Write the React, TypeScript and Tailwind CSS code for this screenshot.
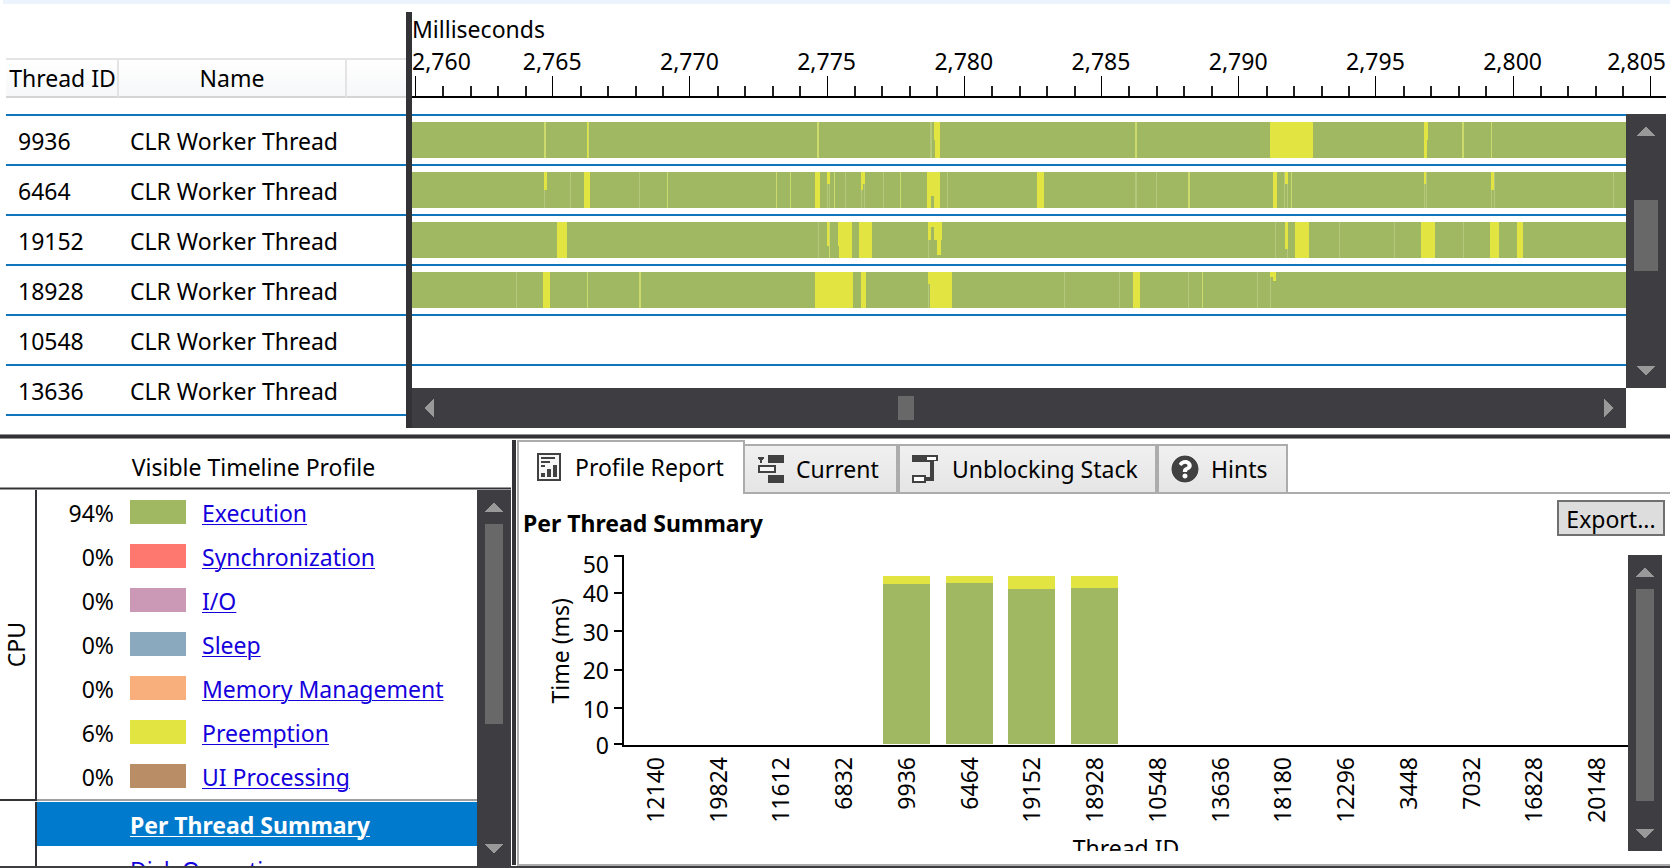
import React from "react";
import { FaQuestionCircle } from "react-icons/fa";

const TRACK_WIDTH = 1214;
const RULER_WIDTH = 1254;

const STRONG = "#e2e442";
const MID = "#cddb6c";
const FAINT = "#b5c87b";
const BASE = "#a1b863";

/** x, width, top, height, fill */
type Segment = [number, number, number, number, string];

const s = (x: number, w: number, h = 36, y = 0): Segment => [x, w, y, h, STRONG];
const m = (x: number, w = 1): Segment => [x, w, 0, 36, MID];
const f = (x: number, w = 1): Segment => [x, w, 0, 36, FAINT];
const b = (x: number, w: number, y: number, h: number): Segment => [x, w, y, h, BASE];

interface Thread {
  id: string;
  segments: Segment[] | null;
}

const threads: Thread[] = [
  {
    id: "9936",
    segments: [
      m(132, 2), m(175, 2), s(175, 1), m(405, 2), f(518, 2), s(522, 6, 18), s(523, 5), m(723, 2),
      s(858, 43), s(1012, 4, 18), s(1012, 3), m(1050, 2), m(1079),
    ],
  },
  {
    id: "6464",
    segments: [
      f(132), s(132, 3, 18), f(158), s(172, 6), f(227), m(255), m(364), m(378), s(403, 5), f(415), f(417),
      s(415, 3, 12), m(422), f(433), f(449), f(452), s(449, 4, 12), s(449, 2, 18), f(471), m(488), s(515, 13),
      b(519, 3, 24, 12), f(535), s(625, 7), f(723, 2), f(744), m(776, 2), s(861, 4), f(872), f(875),
      s(873, 3, 12), m(879), f(1012), f(1014), s(1012, 2, 12), f(1079), f(1082), s(1079, 3, 18), f(1201),
    ],
  },
  {
    id: "19152",
    segments: [
      s(145, 10), f(406), s(415, 3, 24), m(417, 1), s(426, 14), b(426, 1, 24, 12), s(447, 13), f(516),
      s(516, 14, 5), s(516, 3, 18), s(522, 8, 18), s(525, 4, 33), f(863), f(875), s(873, 3, 27), s(883, 14),
      f(927), f(982), s(1009, 14), f(1051), s(1078, 9), s(1105, 6),
    ],
  },
  {
    id: "18928",
    segments: [
      f(104), s(131, 7), m(175), m(227, 2), s(403, 38), s(449, 5), f(516), s(516, 3, 12), s(518, 22),
      f(652), f(707), s(721, 7), f(776), m(790), f(845), f(858), s(858, 6, 5), s(861, 3, 9),
    ],
  },
  { id: "10548", segments: null },
  { id: "13636", segments: null },
];

const categories = [
  { label: "Execution", share: "94%", color: "bg-[#a1b863]" },
  { label: "Synchronization", share: "0%", color: "bg-[#ff7870]" },
  { label: "I/O", share: "0%", color: "bg-[#cb98b6]" },
  { label: "Sleep", share: "0%", color: "bg-[#8aa9bf]" },
  { label: "Memory Management", share: "0%", color: "bg-[#f8af7b]" },
  { label: "Preemption", share: "6%", color: "bg-[#e2e442]" },
  { label: "UI Processing", share: "0%", color: "bg-[#b98d66]" },
];

const chart: { id: string; run?: number; wait?: number }[] = [
  { id: "12140" },
  { id: "19824" },
  { id: "11612" },
  { id: "6832" },
  { id: "9936", run: 160, wait: 8 },
  { id: "6464", run: 161, wait: 7 },
  { id: "19152", run: 155, wait: 13 },
  { id: "18928", run: 156, wait: 12 },
  { id: "10548" },
  { id: "13636" },
  { id: "18180" },
  { id: "12296" },
  { id: "3448" },
  { id: "7032" },
  { id: "16828" },
  { id: "20148" },
];

const arrows = {
  up: "M9 0 18 10H0Z",
  down: "M0 0H18L9 10Z",
  left: "M10 0V18L0 9Z",
  right: "M0 0 10 9 0 18Z",
};

function Arrow({ dir }: { dir: keyof typeof arrows }) {
  const vertical = dir === "up" || dir === "down";
  return (
    <button type="button" aria-label={`Scroll ${dir}`} className="flex shrink-0">
      <svg width={vertical ? 18 : 10} height={vertical ? 10 : 18} shapeRendering="crispEdges">
        <path d={arrows[dir]} fill="#999999" />
      </svg>
    </button>
  );
}

function VerticalBar({ className, thumb }: { className: string; thumb: string }) {
  return (
    <div className={`flex shrink-0 flex-col items-center bg-[#3e3e42] py-3 ${className}`}>
      <Arrow dir="up" />
      <div className="flex w-full flex-1 flex-col items-center">
        <div className={`bg-[#686868] ${thumb}`} />
      </div>
      <Arrow dir="down" />
    </div>
  );
}

function ThreadTable() {
  return (
    <div className="w-[406px] shrink-0 pt-[46px] pl-[6px]">
      <table className="w-full table-fixed border-separate border-spacing-0 text-left">
        <thead>
          <tr className="h-[40px] bg-gradient-to-b from-white to-[#f6f7f9]">
            <th className="w-[113px] border-t-2 border-r-2 border-b-2 border-[#e4e4e4] border-b-[#d5d5d5] p-0 pl-[2px] text-center font-normal whitespace-nowrap">
              Thread ID
            </th>
            <th className="w-[228px] border-t-2 border-r-2 border-b-2 border-[#e4e4e4] border-b-[#d5d5d5] p-0 text-center font-normal">
              Name
            </th>
            <th className="border-t-2 border-b-2 border-[#e4e4e4] border-b-[#d5d5d5] p-0" aria-label="Details" />
          </tr>
        </thead>
        <tbody>
          <tr className="h-4" aria-hidden="true">
            <td colSpan={3} className="p-0" />
          </tr>
          {threads.map((t) => (
            <tr key={t.id} className="h-[50px]">
              <td className="border-t-2 border-[#0f75bd] p-0 pt-[2px] pl-3">{t.id}</td>
              <td className="border-t-2 border-[#0f75bd] p-0 pt-[2px] pl-[11px] whitespace-nowrap">
                CLR Worker Thread
              </td>
              <td className="border-t-2 border-[#0f75bd] p-0" />
            </tr>
          ))}
          <tr aria-hidden="true">
            <td colSpan={3} className="h-[2px] bg-[#0f75bd] p-0" />
          </tr>
        </tbody>
      </table>
    </div>
  );
}

function Ruler() {
  const at = (px: number) => `${(px / RULER_WIDTH) * 100}%`;
  const ticks = Array.from({ length: 46 }, (_, i) => i);
  return (
    <svg className="block h-[60px] w-full overflow-visible" role="img" aria-label="Time ruler">
      {ticks.map((i) => {
        const major = i % 5 === 0;
        return (
          <rect
            key={i}
            x={at(3 + i * 27.44)}
            y={major ? 38 : 48}
            width={major ? 1 : 2}
            height={major ? 21 : 11}
            fill={major ? "#000000" : "#222222"}
            shapeRendering="crispEdges"
          />
        );
      })}
      {ticks
        .filter((i) => i % 5 === 0)
        .map((i) => (
          <text
            key={i}
            x={i === 0 ? "0" : i === 45 ? "100%" : at(3 + i * 27.44)}
            y={32}
            textAnchor={i === 0 ? "start" : i === 45 ? "end" : "middle"}
          >
            {(2760 + i).toLocaleString("en-US")}
          </text>
        ))}
      <rect x="0" y="58" width="100%" height="2" />
    </svg>
  );
}

function Track({ segments }: { segments: Segment[] }) {
  return (
    <svg className="block h-9 w-full bg-[#a1b863]" shapeRendering="crispEdges" aria-hidden="true">
      {segments.map(([x, w, y, h, fill], i) => (
        <rect
          key={i}
          x={`${(x / TRACK_WIDTH) * 100}%`}
          width={`${(w / TRACK_WIDTH) * 100}%`}
          y={y}
          height={h}
          fill={fill}
        />
      ))}
    </svg>
  );
}

function Timeline() {
  return (
    <div className="flex min-w-0 flex-1 flex-col pr-1">
      <div className="h-[26px] leading-[34px]">Milliseconds</div>
      <Ruler />
      <div className="mt-4 flex h-[274px] shrink-0">
        <div className="min-w-0 flex-1 overflow-hidden">
          {threads.map((t) => (
            <div key={t.id} className="h-[50px] border-t-2 border-[#0f75bd] py-[6px]">
              {t.segments && <Track segments={t.segments} />}
            </div>
          ))}
        </div>
        <VerticalBar className="w-10" thumb="mt-16 h-[71px] w-6" />
      </div>
      <div className="mr-10 flex h-10 shrink-0 items-center justify-between bg-[#3e3e42] px-3">
        <Arrow dir="left" />
        <div className="flex flex-1">
          <div className="ml-[39.7%] h-6 w-4 bg-[#686868]" />
        </div>
        <Arrow dir="right" />
      </div>
    </div>
  );
}

function ProfileLegend() {
  return (
    <section className="flex w-[511px] shrink-0 flex-col">
      <h2 className="flex h-12 items-center justify-center pt-[8px] pr-1">Visible Timeline Profile</h2>
      <div className="h-[3px] shrink-0 border-y border-[#9a9a9a] bg-[#333337]" />
      <div className="flex min-h-0 flex-1">
        <div className="min-w-0 flex-1 overflow-hidden">
          <div className="flex">
            <div className="flex w-[37px] items-center justify-center border-r-2 border-[#333337] pr-[2px]">
              <span className="rotate-180 [writing-mode:vertical-rl]">CPU</span>
            </div>
            <ul className="flex-1 pb-[1px]">
              {categories.map((c) => (
                <li key={c.label} className="flex h-11 items-center">
                  <span className="w-[77px] pt-[2px] text-right">{c.share}</span>
                  <span className={`ml-4 h-6 w-14 ${c.color}`} />
                  <a href="#" className="ml-4 pt-[2px] text-[#1400dc] underline decoration-1 underline-offset-2">
                    {c.label}
                  </a>
                </li>
              ))}
            </ul>
          </div>
          <div className="flex h-[3px]">
            <div className="mb-px w-[37px] bg-[#333337]" />
            <div className="mb-px flex-1 bg-[#a0a0a0]" />
          </div>
          <div className="flex h-24">
            <div className="w-[37px] border-r-2 border-[#333337]" />
            <div className="flex-1">
              <a
                href="#"
                className="flex h-11 items-center bg-[#007acc] pt-[2px] pl-[93px] font-bold text-white underline decoration-1 underline-offset-2"
              >
                Per Thread Summary
              </a>
              <a
                href="#"
                className="flex h-11 items-center pt-[4px] pl-[93px] text-[#1400dc] underline decoration-1 underline-offset-2"
              >
                Disk Operations
              </a>
            </div>
          </div>
        </div>
        <VerticalBar className="w-[34px]" thumb="mt-3 h-[200px] w-[18px]" />
      </div>
    </section>
  );
}

function ReportIcon() {
  return (
    <svg width="24" height="28" fill="#414141" shapeRendering="crispEdges" aria-hidden="true">
      <rect x="1" y="1" width="22" height="26" fill="#f6f6f6" stroke="#414141" strokeWidth="2" />
      <path d="M4 4h14v2H4zM4 8h9v2H4zM4 12h4v2H4zM4 20h4v4H4zM10 16h4v8h-4zM16 12h4v12h-4z" />
    </svg>
  );
}

function CurrentIcon() {
  return (
    <svg width="28" height="28" fill="#414141" shapeRendering="crispEdges" aria-hidden="true">
      <path d="M11 0h16v8H11zM11 20h16v8H11zM1 2h6v2H6v1H5v3H3V5H2V4H1z" />
      <rect x="2" y="11" width="16" height="6" fill="#f6f6f6" stroke="#414141" strokeWidth="2" />
    </svg>
  );
}

function UnblockingIcon() {
  return (
    <svg width="26" height="28" fill="#414141" shapeRendering="crispEdges" aria-hidden="true">
      <path d="M0 0h26v6h-4v20h-8v-4h4V7H0z" />
      <path d="M15 2h9v3h-9z" fill="#ffffff" />
      <rect x="1" y="21" width="12" height="6" fill="#ffffff" stroke="#414141" strokeWidth="2" />
    </svg>
  );
}

const idleTab =
  "flex h-[50px] items-center border-2 border-[#acacac] bg-gradient-to-b from-[#f0f0f0] to-[#e5e5e5] whitespace-nowrap";

function Tabs() {
  return (
    <div className="flex h-[54px] items-end" role="tablist">
      <button
        type="button"
        role="tab"
        aria-selected="true"
        className="flex h-[54px] w-[228px] items-center gap-[14px] border-t-2 border-r-2 border-l-2 border-[#acacac] bg-white pb-[2px] pl-[18px] whitespace-nowrap"
      >
        <ReportIcon />
        Profile Report
      </button>
      <button type="button" role="tab" aria-selected="false" className={`${idleTab} w-[153px] gap-[11px] border-l-0 pl-3`}>
        <CurrentIcon />
        Current
      </button>
      <button type="button" role="tab" aria-selected="false" className={`${idleTab} w-[259px] gap-[14px] pl-3`}>
        <UnblockingIcon />
        Unblocking Stack
      </button>
      <button type="button" role="tab" aria-selected="false" className={`${idleTab} w-[131px] gap-3 pl-3`}>
        <FaQuestionCircle size={28} className="rounded-full bg-white text-[#414141]" aria-hidden="true" />
        Hints
      </button>
      <div className="h-[2px] flex-1 bg-[#acacac]" />
    </div>
  );
}

const yTicks = [
  { value: 50, y: 0, text: 18 },
  { value: 40, y: 37, text: 47 },
  { value: 30, y: 75, text: 86 },
  { value: 20, y: 114, text: 124 },
  { value: 10, y: 152, text: 163 },
  { value: 0, y: 188, text: 199 },
];

function ThreadChart() {
  return (
    <div className="flex min-w-0 flex-1 overflow-hidden">
      <div className="flex h-[192px] w-[57px] shrink-0 items-center justify-end">
        <span className="rotate-180 whitespace-nowrap [writing-mode:vertical-rl]">Time (ms)</span>
      </div>
      <svg className="block h-[210px] w-[48px] shrink-0" role="img" aria-label="Time axis">
        {yTicks.map((t) => (
          <g key={t.value}>
            <text x="33" y={t.text} textAnchor="end">
              {t.value}
            </text>
            <rect x="38" y={t.y} width="8" height="2" />
          </g>
        ))}
        <rect x="46" y="0" width="2" height="192" />
      </svg>
      <div className="min-w-0 flex-1">
        <div className="grid h-[192px] grid-cols-16 border-b-2 border-black pb-px">
          {chart.map((c) => (
            <div key={c.id} className="flex flex-col items-center justify-end">
              <div className="w-3/4 bg-[#e2e442]" style={{ height: c.wait ?? 0 }} />
              <div className="w-3/4 bg-[#a1b863]" style={{ height: c.run ?? 0 }} />
            </div>
          ))}
        </div>
        <div className="grid h-[86px] grid-cols-16 pt-[10px]">
          {chart.map((c) => (
            <div key={c.id} className="flex items-start justify-center">
              <span className="rotate-180 [writing-mode:vertical-rl]">{c.id}</span>
            </div>
          ))}
        </div>
        <div className="text-center">Thread ID</div>
      </div>
    </div>
  );
}

function ReportPane() {
  return (
    <section className="flex min-w-0 flex-1 flex-col pt-px">
      <Tabs />
      <div className="flex min-h-0 flex-1 flex-col border-b-2 border-l-2 border-[#acacac] pb-[13px]">
        <div className="flex h-[61px] shrink-0 items-start justify-between pt-[6px] pr-[5px] pl-1">
          <h2 className="pt-[8px] font-bold">Per Thread Summary</h2>
          <button
            type="button"
            className="flex h-9 w-[108px] items-center justify-center border-2 border-[#707070] bg-[#dddddd] pt-[2px]"
          >
            Export...
          </button>
        </div>
        <div className="flex min-h-0 flex-1 pr-2">
          <ThreadChart />
          <VerticalBar className="w-[34px]" thumb="mt-3 h-[212px] w-[18px]" />
        </div>
      </div>
    </section>
  );
}

export default function App() {
  return (
    <main className="flex h-screen flex-col overflow-hidden bg-white font-['Noto_Sans','Open_Sans',sans-serif] text-[23px] leading-[31px] text-black">
      <div className="ml-[3px] h-1 shrink-0 bg-[#ebf3fd]" />
      <section className="mt-2 flex shrink-0">
        <ThreadTable />
        <div className="w-[6px] shrink-0 bg-[#333337]" />
        <Timeline />
      </section>
      <div className="mt-[6px] h-[5px] shrink-0 border-y border-[#8f8f8f] bg-[#333337]" />
      <div className="flex min-h-0 flex-1 border-b-2 border-[#3e3e42]">
        <ProfileLegend />
        <div className="mt-px mr-px mb-px ml-px w-1 shrink-0 bg-[#333337]" />
        <ReportPane />
      </div>
    </main>
  );
}
